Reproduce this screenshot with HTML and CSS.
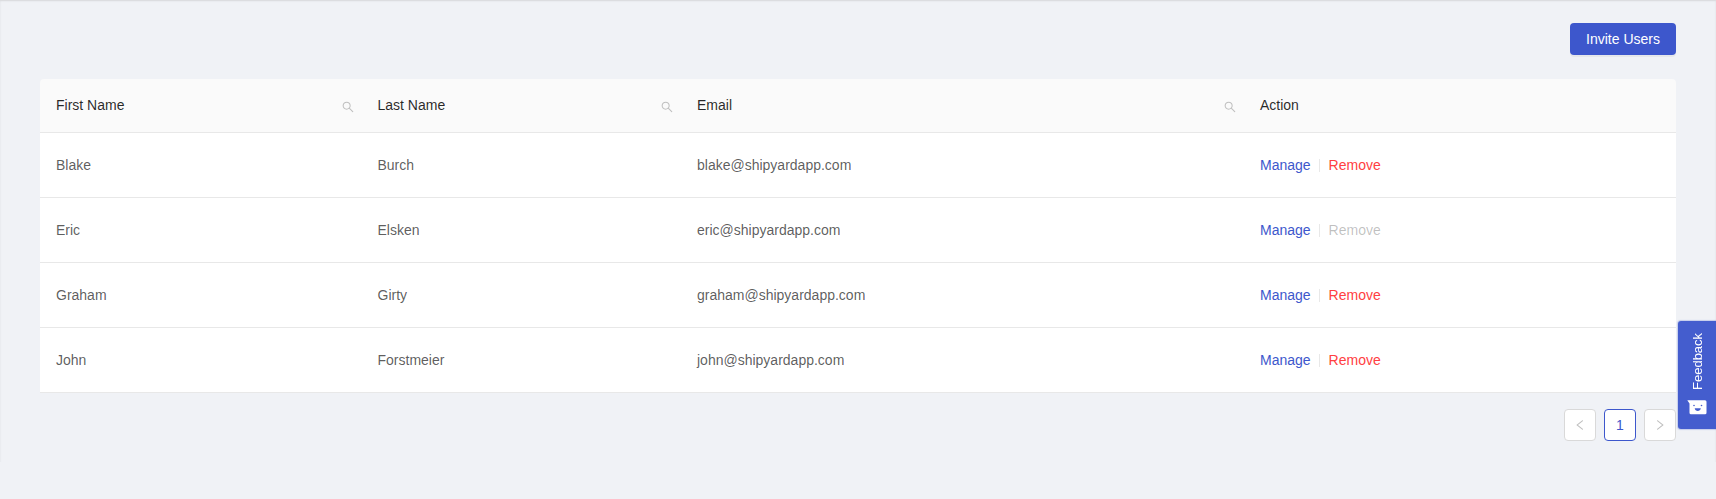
FILE: index.html
```html
<!DOCTYPE html>
<html lang="en">
<head>
<meta charset="utf-8">
<title>Users</title>
<link rel="stylesheet" href="styles.css">
</head>
<body>
<svg class="sprite" width="0" height="0">
  <symbol id="search" viewBox="64 64 896 896"><path d="M909.6 854.5L649.9 594.8C690.2 542.7 712 479 712 412c0-80.2-31.3-155.4-87.9-212.1-56.6-56.7-132-87.9-212.1-87.9s-155.5 31.3-212.1 87.9C143.2 256.5 112 331.8 112 412c0 80.1 31.3 155.5 87.9 212.1C256.5 680.8 331.8 712 412 712c67 0 130.6-21.8 182.7-62l259.7 259.6a8.2 8.2 0 0 0 11.6 0l43.6-43.5a8.2 8.2 0 0 0 0-11.6zM570.4 570.4C528 612.7 471.8 636 412 636s-116-23.3-158.4-65.6C211.3 528 188 471.8 188 412s23.3-116.1 65.6-158.4C296 211.3 352.2 188 412 188s116.1 23.2 158.4 65.6S636 352.2 636 412s-23.3 116.1-65.6 158.4z"/></symbol>
</svg>
<main class="content">
  <div class="toolbar"><button class="btn">Invite Users</button></div>
  <table class="users">
    <colgroup><col class="c-first"><col class="c-last"><col class="c-email"><col></colgroup>
    <thead>
      <tr>
        <th><div class="head">First Name<svg class="search"><use href="#search"/></svg></div></th>
        <th><div class="head">Last Name<svg class="search"><use href="#search"/></svg></div></th>
        <th><div class="head">Email<svg class="search"><use href="#search"/></svg></div></th>
        <th><div class="head">Action</div></th>
      </tr>
    </thead>
    <tbody>
      <tr><td>Blake</td><td>Burch</td><td>blake@shipyardapp.com</td><td><a class="manage">Manage</a><span class="divider"></span><a class="remove">Remove</a></td></tr>
      <tr><td>Eric</td><td>Elsken</td><td>eric@shipyardapp.com</td><td><a class="manage">Manage</a><span class="divider"></span><a class="remove disabled">Remove</a></td></tr>
      <tr><td>Graham</td><td>Girty</td><td>graham@shipyardapp.com</td><td><a class="manage">Manage</a><span class="divider"></span><a class="remove">Remove</a></td></tr>
      <tr><td>John</td><td>Forstmeier</td><td>john@shipyardapp.com</td><td><a class="manage">Manage</a><span class="divider"></span><a class="remove">Remove</a></td></tr>
    </tbody>
  </table>
  <nav class="pagination">
    <span class="page"><svg class="arrow" viewBox="64 64 896 896"><path d="M724 218.3V141c0-6.700-7.700-10.400-12.900-6.300L260.300 486.800a31.860 31.860 0 0 0 0 50.300l450.800 352.100c5.300 4.100 12.900.4 12.900-6.300v-77.300c0-4.900-2.300-9.600-6.100-12.600l-360-281 360-281.100c3.800-3 6.100-7.700 6.100-12.600z"/></svg></span>
    <span class="page current">1</span>
    <span class="page"><svg class="arrow" viewBox="64 64 896 896"><path d="M765.700 486.800L314.900 134.700A7.970 7.970 0 0 0 302 141v77.300c0 4.900 2.300 9.600 6.100 12.600l360 281.100-360 281.100c-3.900 3-6.100 7.700-6.100 12.600V883c0 6.700 7.700 10.400 12.900 6.300l450.800-352.100a31.960 31.960 0 0 0 0-50.400z"/></svg></span>
  </nav>
</main>
<aside class="feedback">
  <span class="feedback-label">Feedback</span>
  <svg class="face" width="20" height="15" viewBox="0 0 20 15">
    <path class="face-shape" d="M.3.300H18a1.500 1.500 0 0 1 1.500 1.500v11A1.500 1.500 0 0 1 18 14.300H4A1.500 1.500 0 0 1 2.500 12.800V3.500z"/>
    <circle class="face-mark" cx="7" cy="5.500" r=".8"/><circle class="face-mark" cx="14.500" cy="5.500" r=".8"/>
    <path class="face-mark" d="M7.700 8.300h6.100c-.4 3.600-5.700 3.600-6.100 0z"/>
  </svg>
</aside>
</body>
</html>
```
FILE: styles.css
```css
* { box-sizing: border-box; }
body {
  margin: 0;
  background: #f0f2f6;
  color: rgba(0, 0, 0, .65);
  font: 14px/22px "Liberation Sans", Arial, sans-serif;
}
.sprite { display: block; }
.content {
  height: 463px;
  padding: 23px 40px 0;
  box-shadow: inset 0 1px 0 #dcdde0, inset 0 1px 2px rgba(0, 0, 0, .1);
  clip-path: inset(0 0 1px);
}
.toolbar { display: flex; justify-content: flex-end; height: 56px; }
.btn {
  width: 106px;
  height: 32px;
  padding: 0;
  border: 0;
  border-radius: 4px;
  background: #3d57cc;
  color: #fff;
  font: inherit;
  line-height: 30px;
  box-shadow: 0 2px 0 rgba(0, 0, 0, .045);
}
.users {
  width: 100%;
  table-layout: fixed;
  border-collapse: separate;
  border-spacing: 0;
}
.c-first { width: 321.5px; }
.c-last { width: 319.5px; }
.c-email { width: 563px; }
th, td { padding: 0 16px; text-align: left; border-bottom: 1px solid #e8e8e8; }
th { height: 54px; padding-bottom: 2px; background: #fafafa; color: rgba(0, 0, 0, .85); font-weight: 400; }
th:first-child { border-top-left-radius: 4px; }
th:last-child { border-top-right-radius: 4px; }
td { height: 65px; background: #fff; }
.head { display: flex; align-items: center; justify-content: space-between; }
.search { width: 12px; height: 12px; margin: 4px -8px 0 0; fill: #bfbfbf; }
.manage { color: #3d57cc; }
.remove { color: #ff4042; }
.remove.disabled { color: rgba(0, 0, 0, .25); }
.divider {
  display: inline-block;
  width: 1px;
  height: 13px;
  margin: 0 9px 0 8px;
  background: #e8e8e8;
  vertical-align: -2px;
}
.pagination { display: flex; justify-content: flex-end; gap: 8px; margin-top: 16px; }
.page {
  display: flex;
  align-items: center;
  justify-content: center;
  width: 32px;
  height: 32px;
  border: 1px solid #d9d9d9;
  border-radius: 4px;
  background: #fff;
}
.page.current { border-color: #3d57cc; color: #3d57cc; }
.arrow { width: 12px; height: 12px; fill: #bfbfbf; }
.feedback {
  position: fixed;
  right: 0;
  top: 321px;
  display: flex;
  flex-direction: column;
  align-items: center;
  gap: 10px;
  width: 38px;
  height: 108px;
  padding-top: 11px;
  border-radius: 3px 0 0 3px;
  background: #445dce;
  color: #fff;
  box-shadow: 0 0 1px 1px rgba(68, 93, 206, .25);
}
.feedback-label {
  height: 58px;
  writing-mode: vertical-rl;
  transform: rotate(180deg);
  font-size: 13px;
  line-height: 15px;
  white-space: nowrap;
}
.face-shape { fill: #fff; }
.face-mark { fill: #445dce; }
```
